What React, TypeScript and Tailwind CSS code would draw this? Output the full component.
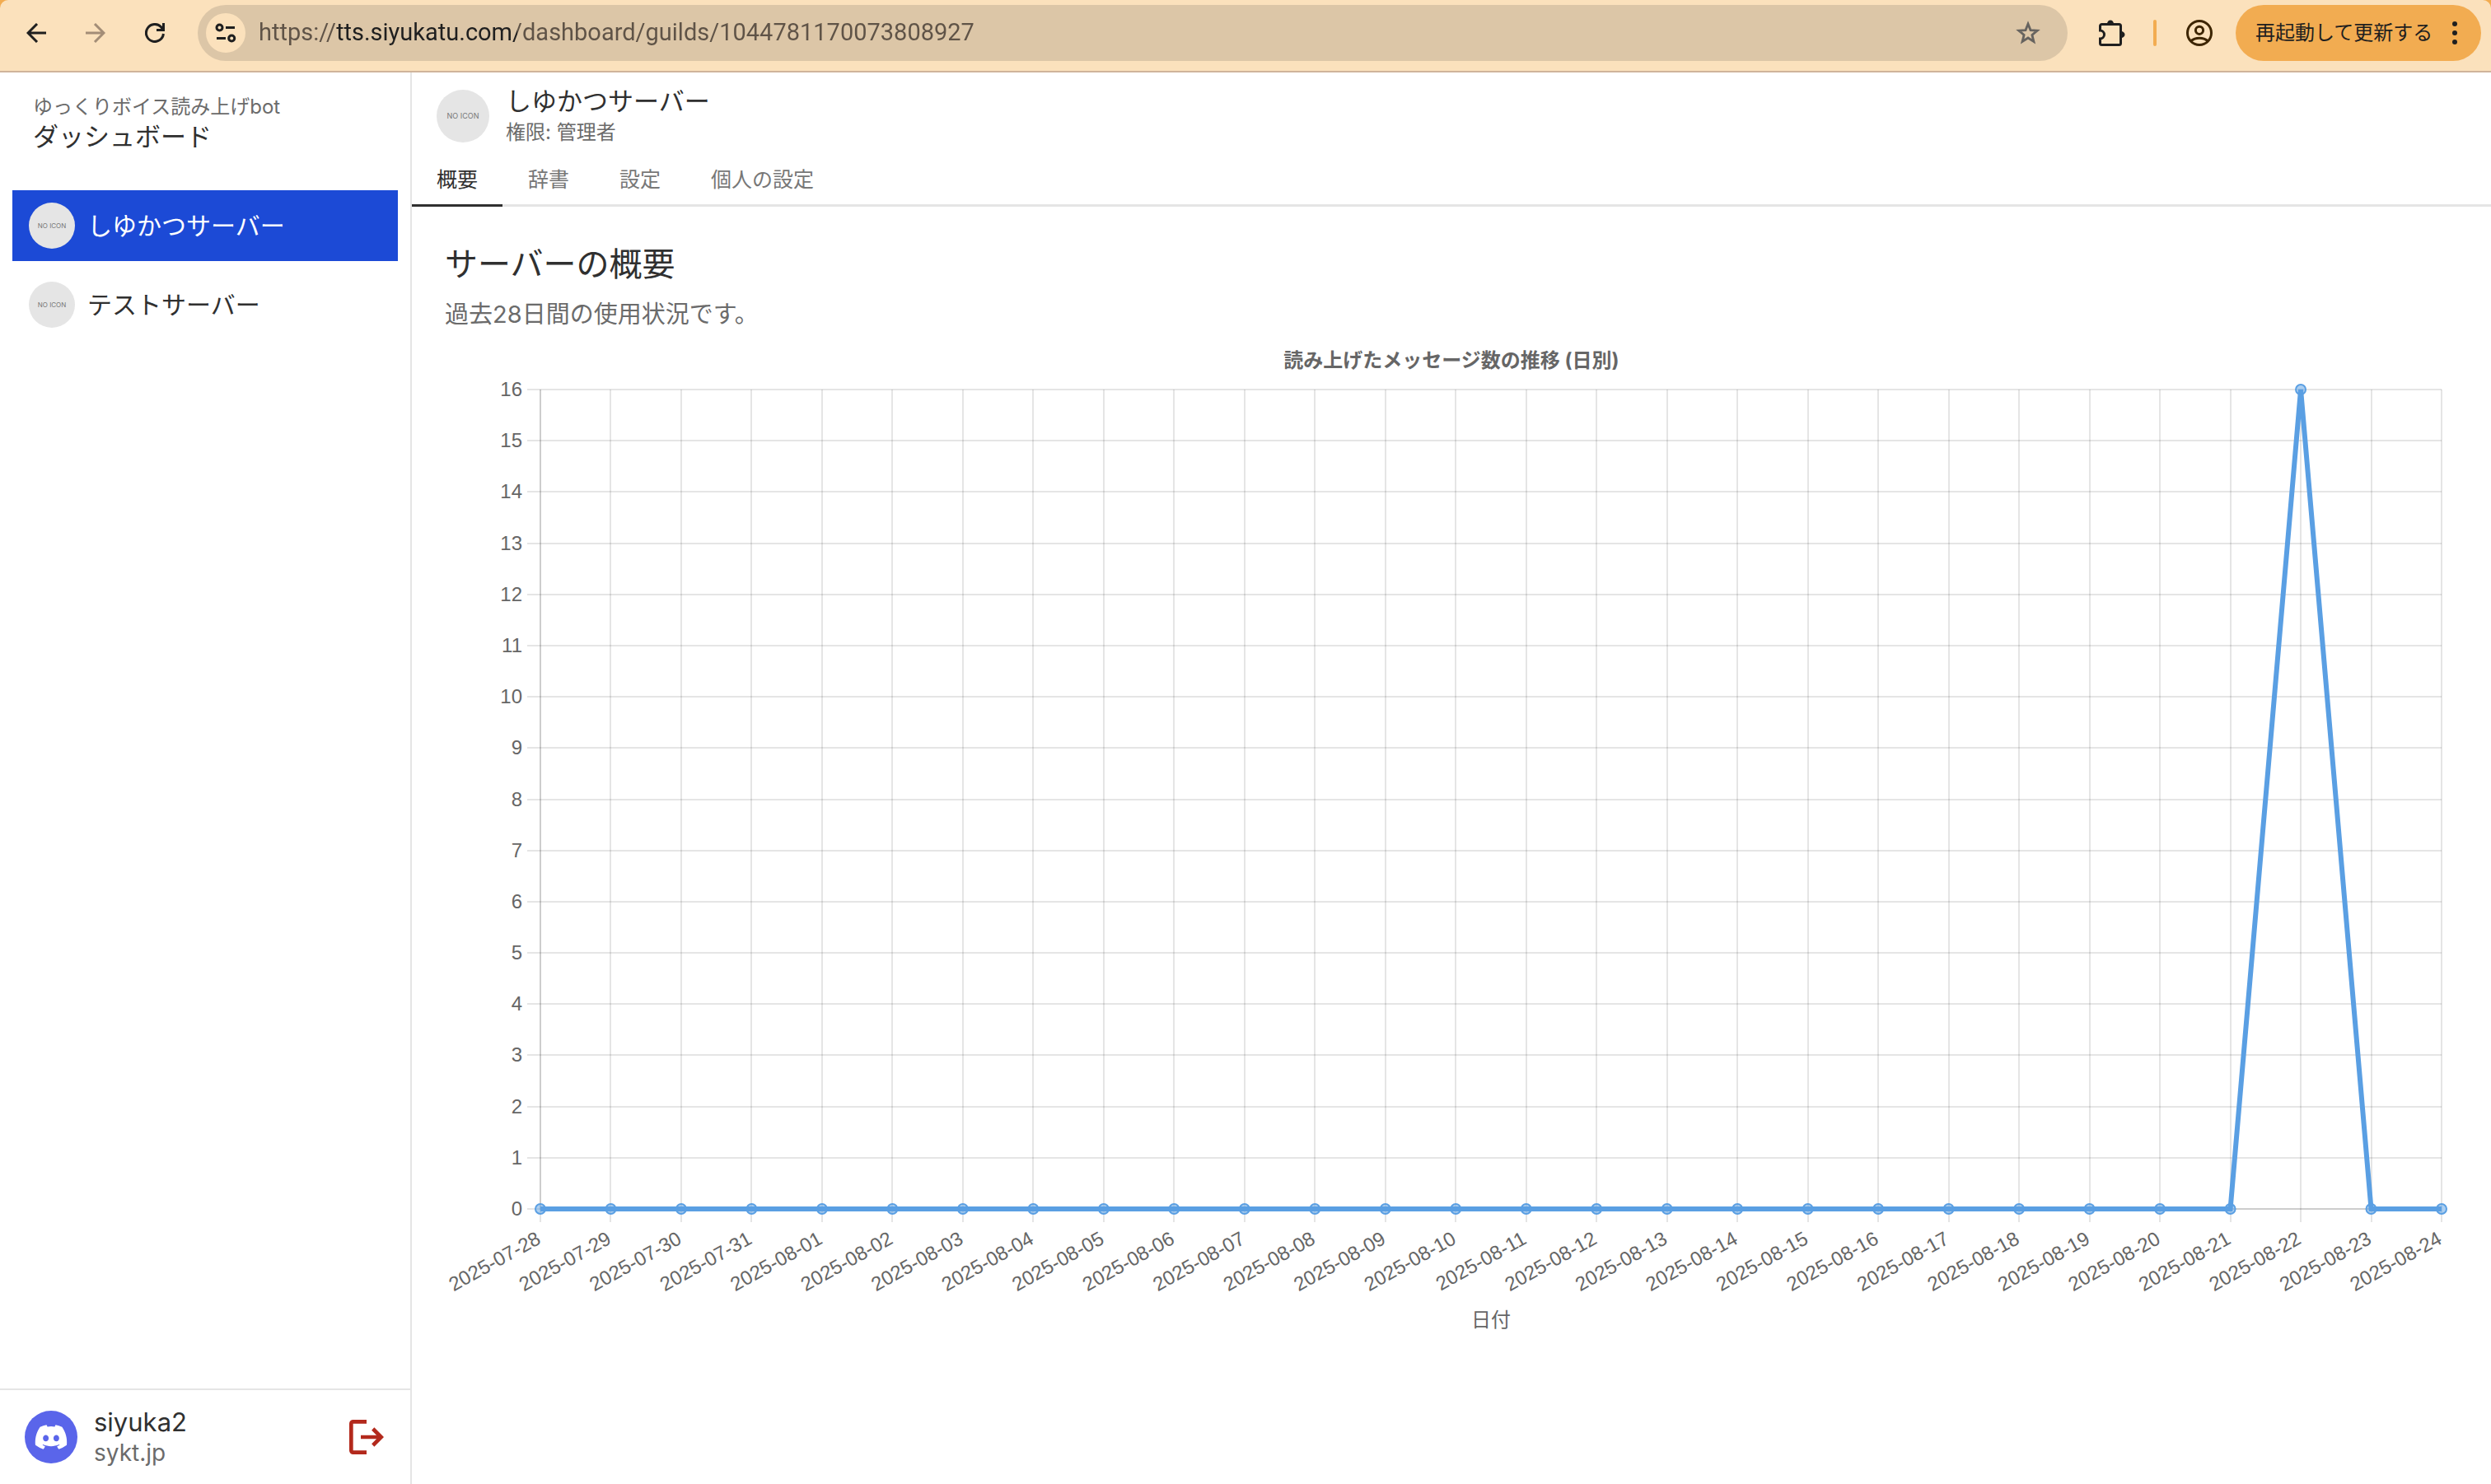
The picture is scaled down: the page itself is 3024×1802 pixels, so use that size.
import React, { useState } from "react";

type Guild = {
  id: string;
  name: string;
};

const guilds: Guild[] = [
  { id: "1044781170073808927", name: "しゆかつサーバー" },
  { id: "2", name: "テストサーバー" },
];

const tabs = ["概要", "辞書", "設定", "個人の設定"];

const days = Array.from({ length: 28 }, (_, i) =>
  new Date(Date.UTC(2025, 6, 28 + i)).toISOString().slice(0, 10)
);
const counts = days.map((day) => (day === "2025-08-22" ? 16 : 0));

const NoIcon = ({ large = false }: { large?: boolean }) => (
  <span
    className={`flex shrink-0 items-center justify-center rounded-full bg-[#e5e5e5] text-[#777777] ${
      large ? "size-16 text-[9px]" : "size-14 text-[8px]"
    }`}>
    NO ICON
  </span>
);

const Toolbar = () => (
  <header className="bg-[#f2ac51]">
    <div className="flex h-[88px] items-center rounded-t-[10px] border-b-2 border-[#cfb49b] bg-[#fbe1bc] pb-[6px] pl-8 pr-3">
      <div className="flex shrink-0 gap-12">
        <button aria-label="戻る">
          <svg className="size-6" viewBox="0 0 24 24" fill="none" stroke="#1f1f1f" strokeWidth="3">
            <path d="M24 12H2M13 1L2 12l11 11" />
          </svg>
        </button>
        <button aria-label="進む">
          <svg className="size-6" viewBox="0 0 24 24" fill="none" stroke="#a38d77" strokeWidth="3">
            <path d="M0 12h22M11 1l11 11-11 11" />
          </svg>
        </button>
        <button aria-label="再読み込み">
          <svg className="size-6" viewBox="0 0 24 24" fill="none" stroke="#1f1f1f" strokeWidth="3">
            <path d="M22.4 13A10.5 10.5 0 1 1 19.6 4.8L22.5 8.5" />
            <path d="M22.5 0v8.5H14" />
            <path d="M22.5 8.5V5L18 4.5z" fill="#1f1f1f" stroke="none" />
          </svg>
        </button>
      </div>
      <div className="ml-10 flex h-[68px] flex-1 items-center rounded-full bg-[#dcc6a7] pl-[10px] pr-[33px]">
        <button aria-label="サイト情報" className="rounded-full bg-[#fbe1bc]">
          <svg className="size-12" viewBox="0 0 48 48" fill="none" stroke="#1f1f1f" strokeWidth="3">
            <circle cx="16.5" cy="17.5" r="3.5" />
            <path d="M24 17.5h11M13 30.5h11" />
            <circle cx="31.2" cy="30.5" r="3.5" />
          </svg>
        </button>
        <input
          aria-label="アドレス"
          className="ml-4 min-w-0 flex-1 bg-linear-[90deg,#5f5347_95px,#1f1f1f_95px,#1f1f1f_314px,#5f5347_314px] bg-clip-text font-[Roboto] text-[29px] text-transparent outline-none"
          defaultValue="https://tts.siyukatu.com/dashboard/guilds/1044781170073808927"
        />
        <button aria-label="ブックマーク">
          <svg className="size-[30px]" viewBox="0 0 30 30" fill="none" stroke="#66635f" strokeWidth="2.8">
            <path d="M15 4l3 7.6 8.2.6-6.3 5.2 2 8L15 21l-6.9 4.4 2-8-6.3-5.2 8.2-.6z" />
          </svg>
        </button>
      </div>
      <button aria-label="拡張機能" className="ml-[38px]">
        <svg className="size-8" viewBox="0 0 32 32" fill="none" stroke="#1f1f1f" strokeWidth="3">
          <path d="M1.5 12V7.5a2 2 0 0 1 2-2h21a2 2 0 0 1 2 2v21a2 2 0 0 1-2 2h-21a2 2 0 0 1-2-2V23a5 5 0 0 0 0-10z" />
          <path d="M10 5a4 4.500 0 0 1 8 0zM27 14a4.500 4 0 0 1 0 8z" fill="#1f1f1f" stroke="none" />
        </svg>
      </button>
      <span className="ml-[34px] h-8 w-1 rounded-full bg-[#f2ac51]" />
      <button aria-label="プロフィール" className="ml-9">
        <svg className="size-8" viewBox="0 0 32 32" fill="none" stroke="#3d2500" strokeWidth="3">
          <circle cx="16" cy="16" r="14.500" />
          <circle cx="16" cy="12.800" r="4.600" />
          <path d="M5.500 26c3-2.600 6.500-3.800 10.500-3.800S23.500 23.400 26.500 26" />
        </svg>
      </button>
      <button className="ml-7 flex h-[68px] w-[298px] items-center justify-between rounded-full bg-[#f2ac51] pl-6 pr-[26px] text-2xl text-[#1f1f1f]">
        再起動して更新する
        <svg className="h-8 w-[12px]" viewBox="0 0 12 32" fill="#1f1f1f">
          <circle cx="6" cy="5" r="3" />
          <circle cx="6" cy="16" r="3" />
          <circle cx="6" cy="27" r="3" />
        </svg>
      </button>
    </div>
  </header>
);

const Sidebar = () => (
  <aside className="flex w-[500px] shrink-0 flex-col border-r-2 border-[#e5e5e5]">
    <div className="px-10 pt-6">
      <p className="text-2xl leading-9 text-[#6b6b6b]">ゆっくりボイス読み上げbot</p>
      <h1 className="text-[31px] leading-9">ダッシュボード</h1>
    </div>
    <nav className="mt-[47px] flex flex-1 flex-col gap-[10px] px-[15px]">
      {guilds.map((guild, idx) => (
        <a
          key={guild.id}
          href={`#${guild.id}`}
          className={`flex h-[86px] items-center gap-[15px] px-5 text-[30px] ${
            idx === 0 ? "bg-[#1c4ad6] text-white" : ""
          }`}>
          <NoIcon />
          {guild.name}
        </a>
      ))}
    </nav>
    <div className="flex items-center border-t-2 border-[#e5e5e5] py-5 pl-[30px] pr-8">
      <svg className="size-16 shrink-0" viewBox="0 0 64 64">
        <circle cx="32" cy="32" r="32" fill="#5a65ea" />
        <path
          transform="translate(12.800 12.800) scale(1.600)"
          fill="#fff"
          d="M20.317 4.370a19.791 19.791 0 0 0-4.885-1.515.074.074 0 0 0-.079.037c-.21.375-.444.864-.608 1.250a18.270 18.270 0 0 0-5.487 0 12.640 12.640 0 0 0-.617-1.250.077.077 0 0 0-.079-.037A19.736 19.736 0 0 0 3.677 4.370a.070.070 0 0 0-.032.027C.533 9.046-.32 13.580.099 18.057a.082.082 0 0 0 .031.057 19.900 19.900 0 0 0 5.993 3.030.078.078 0 0 0 .084-.028 14.090 14.090 0 0 0 1.226-1.994.076.076 0 0 0-.041-.106 13.107 13.107 0 0 1-1.872-.892.077.077 0 0 1-.008-.128 10.200 10.200 0 0 0 .372-.292.074.074 0 0 1 .077-.010c3.928 1.793 8.180 1.793 12.062 0a.074.074 0 0 1 .078.010c.12.098.246.198.373.292a.077.077 0 0 1-.006.127 12.299 12.299 0 0 1-1.873.892.077.077 0 0 0-.041.107c.36.698.772 1.362 1.225 1.993a.076.076 0 0 0 .084.028 19.839 19.839 0 0 0 6.002-3.030.077.077 0 0 0 .032-.054c.5-5.177-.838-9.674-3.549-13.660a.061.061 0 0 0-.031-.030zM8.020 15.330c-1.183 0-2.157-1.085-2.157-2.419 0-1.333.956-2.419 2.157-2.419 1.210 0 2.176 1.096 2.157 2.420 0 1.333-.956 2.418-2.157 2.418zm7.975 0c-1.183 0-2.157-1.085-2.157-2.419 0-1.333.955-2.419 2.157-2.419 1.210 0 2.176 1.096 2.157 2.420 0 1.333-.946 2.418-2.157 2.418z"
        />
      </svg>
      <div className="ml-5 flex-1">
        <p className="text-[31px] leading-[38px]">siyuka2</p>
        <p className="text-[28px] leading-9 text-[#6b6b6b]">sykt.jp</p>
      </div>
      <button aria-label="ログアウト">
        <svg className="size-[42px]" viewBox="3 3 18 18" fill="#b3291c">
          <path d="M5 21q-.825 0-1.412-.587T3 19V5q0-.825.588-1.412T5 3h7v2H5v14h7v2zm11-4l-1.375-1.450 2.550-2.550H9v-2h8.175l-2.550-2.550L16 7l5 5z" />
        </svg>
      </button>
    </div>
  </aside>
);

// plot area inside the 2444x1224 viewBox
const plot = { left: 116, right: 2424, top: 56, bottom: 1051 };
const maxCount = 16;

const xAt = (i: number) =>
  plot.left + ((plot.right - plot.left) * i) / (days.length - 1);
const yAt = (v: number) =>
  plot.bottom - ((plot.bottom - plot.top) * v) / maxCount;

const UsageChart = () => (
  <svg
    className="mt-[13px] w-full"
    viewBox="0 0 2444 1224"
    role="img"
    aria-label="読み上げたメッセージ数の推移"
    fontSize="24"
    fill="#666666">
    <text x="1222" y="29" textAnchor="middle" fontWeight="bold">
      読み上げたメッセージ数の推移 (日別)
    </text>
    <g stroke="#000000" strokeOpacity="0.1" strokeWidth="2">
      {days.map((day, i) => (
        <path key={day} d={`M${Math.round(xAt(i))} ${plot.top}V${plot.bottom + 16}`} />
      ))}
      {Array.from({ length: maxCount + 1 }, (_, v) => (
        <path key={v} d={`M${plot.left - 16} ${Math.round(yAt(v))}H${plot.right}`} />
      ))}
      <path d={`M${plot.left} ${plot.top}V${plot.bottom}H${plot.right}`} fill="none" />
    </g>
    <g className="font-['Liberation_Sans']">
      {Array.from({ length: maxCount + 1 }, (_, v) => (
        <text key={v} x="94" y={yAt(v) + 8} textAnchor="end">
          {v}
        </text>
      ))}
      {days.map((day, i) => (
        <text
          key={day}
          textAnchor="end"
          transform={`translate(${xAt(i) + 2} ${plot.bottom + 41}) rotate(-29)`}>
          {day}
        </text>
      ))}
    </g>
    <polyline
      points={counts.map((v, i) => `${xAt(i)},${yAt(v)}`).join(" ")}
      fill="none"
      stroke="#5a9fe3"
      strokeWidth="6"
    />
    {counts.map((v, i) => (
      <circle
        key={days[i]}
        cx={xAt(i)}
        cy={yAt(v)}
        r="6"
        fill="#5a9fe3"
        fillOpacity="0.5"
        stroke="#5a9fe3"
        strokeWidth="2"
      />
    ))}
    <text x="1270" y="1194" textAnchor="middle">
      日付
    </text>
  </svg>
);

const App = () => {
  const [activeTab, setActiveTab] = useState(tabs[0]);

  return (
    <div className="flex min-h-screen flex-col bg-white font-[Inter,'Noto_Sans_CJK_JP',sans-serif] text-[#303030]">
      <Toolbar />
      <div className="flex flex-1">
        <Sidebar />
        <main className="min-w-0 flex-1">
          <div className="flex items-center gap-5 px-[30px] pt-[15px]">
            <NoIcon large />
            <div>
              <h2 className="text-[31px] leading-10">しゆかつサーバー</h2>
              <p className="text-2xl leading-9 text-[#6b6b6b]">権限: 管理者</p>
            </div>
          </div>
          <div className="mt-[9px] flex gap-px border-b-[3px] border-[#e5e5e5]">
            {tabs.map((tab) => (
              <button
                key={tab}
                onClick={() => setActiveTab(tab)}
                className={`-mb-[3px] border-b-[3px] px-[30px] text-[25px] leading-[60px] ${
                  tab === activeTab
                    ? "border-[#303030]"
                    : "border-transparent text-[#777777]"
                }`}>
                {tab}
              </button>
            ))}
          </div>
          <section className="px-10 pt-10">
            <h3 className="text-[40px] leading-[60px]">サーバーの概要</h3>
            <p className="mt-[9px] text-[29px] leading-[44px] text-[#6b6b6b]">
              過去28日間の使用状況です。
            </p>
            <UsageChart />
          </section>
        </main>
      </div>
    </div>
  );
};

export default App;
